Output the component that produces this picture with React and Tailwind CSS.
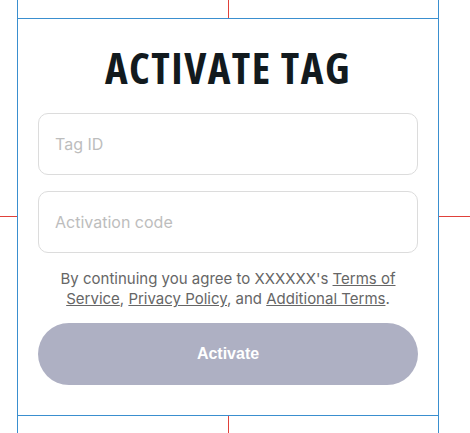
import React from 'react';

const App = () => {
  return (
    <div className="flex h-[433px] w-[470px] bg-white" style={{ fontFamily: 'Inter, "Liberation Sans", sans-serif' }}>
      <div className="flex w-[17px] flex-col justify-center">
        <div className="h-px bg-[#e0413a]" />
      </div>

      <div className="flex w-[422px] flex-col border-x border-[#3a8fcf]">
        <div className="flex h-[18px] justify-center">
          <div className="w-px bg-[#e0413a]" />
        </div>

        <div className="flex flex-1 flex-col border-y border-[#3a8fcf] px-5">
          <h1
            className="mt-[23px] text-center text-[43px] font-bold leading-[52px] tracking-[1.5px] text-[#121a1e]"
            style={{ fontFamily: '"Open Sans", sans-serif', fontStretch: '75%' }}
          >
            ACTIVATE TAG
          </h1>

          <div className="mt-[19px] flex flex-col gap-4">
            <input
              type="text"
              placeholder="Tag ID"
              className="h-[62px] rounded-[10px] border border-[#dcdcdc] px-4 text-base placeholder:text-[#bdbdbd] focus:outline-none"
            />
            <input
              type="text"
              placeholder="Activation code"
              className="h-[62px] rounded-[10px] border border-[#dcdcdc] px-4 text-base placeholder:text-[#bdbdbd] focus:outline-none"
            />
          </div>

          <p className="mx-auto mt-[16px] w-[356px] text-center text-[15px] leading-5 text-[#666666]">
            By continuing you agree to XXXXXX's <a className="underline">Terms of </a>
            <a className="underline">Service</a>, <a className="underline">Privacy Policy</a>, and{' '}
            <a className="underline">Additional Terms</a>.
          </p>

          <button
            className="mt-[14px] h-[62px] rounded-full bg-[#aeb0c3] text-base font-bold text-white"
            style={{ fontFamily: '"Liberation Sans", Arial, sans-serif' }}
          >
            Activate
          </button>
        </div>

        <div className="flex h-[17px] justify-center">
          <div className="w-px bg-[#e0413a]" />
        </div>
      </div>

      <div className="flex flex-1 flex-col justify-center">
        <div className="h-px bg-[#e0413a]" />
      </div>
    </div>
  );
};

export default App;
